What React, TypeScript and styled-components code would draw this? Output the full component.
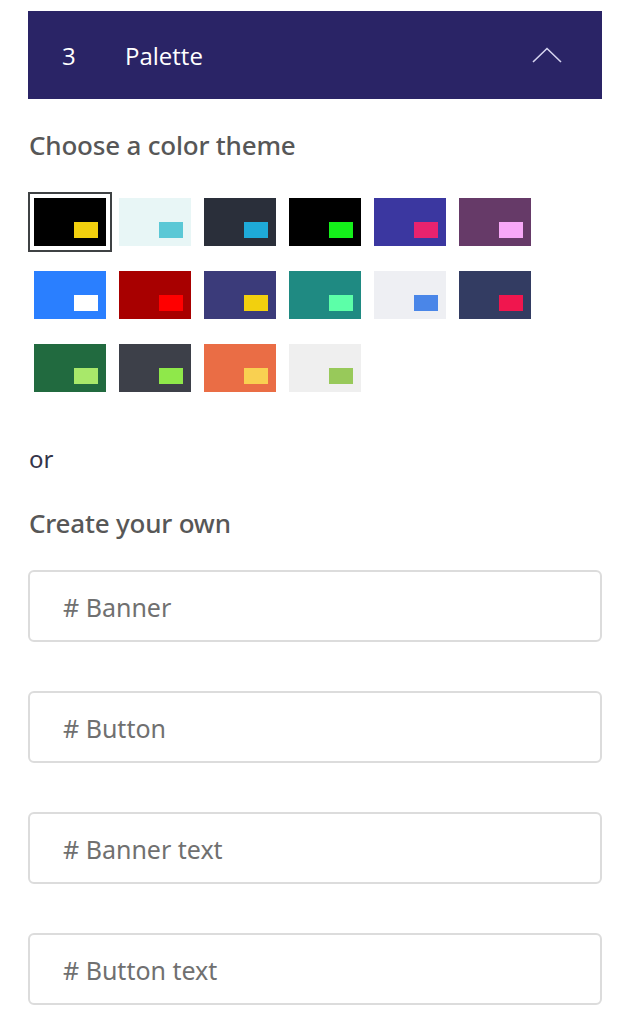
import React from "react";
import styled, { createGlobalStyle } from "styled-components";

const Global = createGlobalStyle`
  html, body { margin: 0; padding: 0; background: #fff; }
  body { font-family: "Noto Sans", "Open Sans", sans-serif; }
  * { box-sizing: border-box; }
`;

const Page = styled.div`
  padding: 11px 27px 0 28px;
  display: flex;
  flex-direction: column;
`;

const Header = styled.div`
  height: 88px;
  background: #2a2466;
  display: flex;
  align-items: center;
  padding: 0 40px 0 34px;
  color: #fff;
  font-family: "Open Sans", sans-serif;
  font-size: 24px;
`;

const StepNum = styled.span`
  width: 63px;
`;

const Title = styled.span`
  flex: 1;
`;

const Heading = styled.h2<{ $top: number }>`
  margin: ${(p) => p.$top}px 0 0 1px;
  font-family: "Noto Sans", sans-serif;
  font-weight: 500;
  font-size: 26px;
  line-height: 32px;
  color: #575757;
  letter-spacing: -0.2px;
`;

const Grid = styled.div`
  margin-top: 31px;
  display: grid;
  grid-template-columns: repeat(6, 84px);
  column-gap: 1px;
  row-gap: 13px;
`;

const Cell = styled.div<{ $selected?: boolean }>`
  width: 84px;
  height: 60px;
  padding: 4px;
  border: 2px solid ${(p) => (p.$selected ? "#3f4244" : "transparent")};
`;

const Swatch = styled.div<{ $bg: string }>`
  width: 72px;
  height: 48px;
  background: ${(p) => p.$bg};
  display: flex;
  align-items: flex-end;
  justify-content: flex-end;
  padding: 0 8px 8px 0;
`;

const Accent = styled.div<{ $bg: string }>`
  width: 24px;
  height: 16px;
  background: ${(p) => p.$bg};
`;

const Or = styled.p`
  margin: 45px 0 0 1px;
  font-size: 24px;
  line-height: 32px;
  color: #34344a;
`;

const Fields = styled.div`
  margin-top: 31px;
  display: flex;
  flex-direction: column;
  gap: 49px;
`;

const Field = styled.input`
  height: 72px;
  width: 100%;
  border: 2px solid #dcdcdc;
  border-radius: 6px;
  padding: 2px 0 0 33px;
  font-family: "Noto Sans", sans-serif;
  font-size: 25px;
  color: #444;
  outline: none;
  &::placeholder { color: #707070; }
`;

const themes: [string, string][] = [
  ["#000000", "#f2d00e"],
  ["#e8f6f6", "#5bc8d6"],
  ["#2a2f3a", "#1eaad8"],
  ["#000000", "#14f01a"],
  ["#3b37a0", "#e8236e"],
  ["#663a68", "#f8a8f8"],
  ["#2a7fff", "#ffffff"],
  ["#a80000", "#ff0000"],
  ["#3b3b7a", "#f2d00e"],
  ["#1f8a82", "#5cffa8"],
  ["#eeeff3", "#4a86e8"],
  ["#333c62", "#f0164e"],
  ["#216a3f", "#a8e86a"],
  ["#3d4049", "#8fe84a"],
  ["#ea6d45", "#f9d051"],
  ["#efefef", "#98c95a"],
];

const Chevron = () => (
  <svg width="30" height="16" viewBox="0 0 30 16" fill="none">
    <path d="M1 15 L15 1.5 L29 15" stroke="#d6d4f0" strokeWidth="1.6" />
  </svg>
);

export default function App() {
  return (
    <>
      <Global />
      <Page>
        <Header>
          <StepNum>3</StepNum>
          <Title>Palette</Title>
          <Chevron />
        </Header>
        <Heading $top={30}>Choose a color theme</Heading>
        <Grid>
          {themes.map(([bg, acc], i) => (
            <Cell key={i} $selected={i === 0}>
              <Swatch $bg={bg}>
                <Accent $bg={acc} />
              </Swatch>
            </Cell>
          ))}
        </Grid>
        <Or>or</Or>
        <Heading $top={32}>Create your own</Heading>
        <Fields>
          <Field placeholder="# Banner" />
          <Field placeholder="# Button" />
          <Field placeholder="# Banner text" />
          <Field placeholder="# Button text" />
        </Fields>
      </Page>
    </>
  );
}
